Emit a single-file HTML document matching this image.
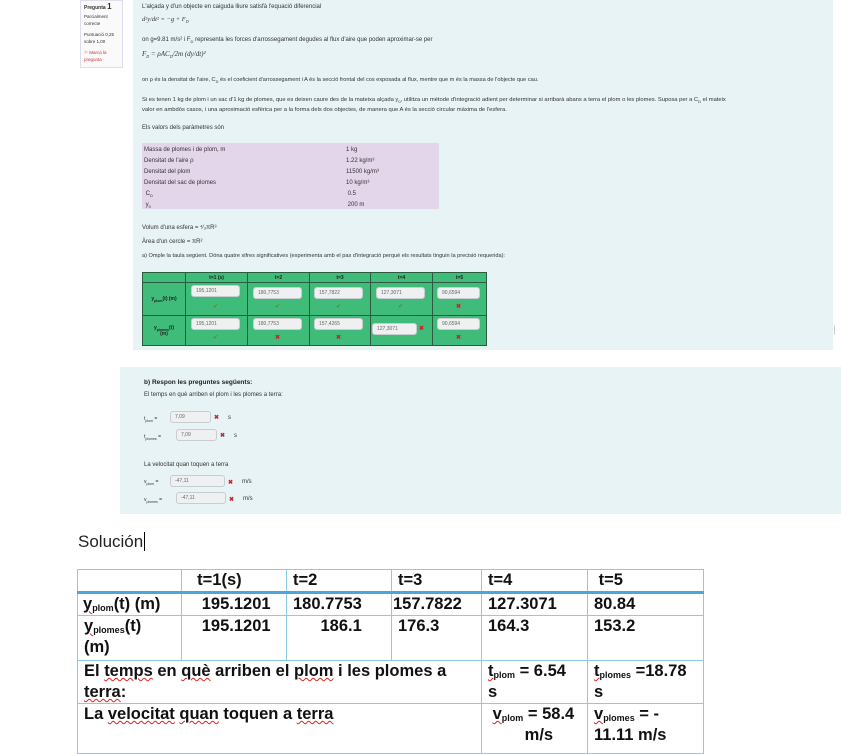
<!DOCTYPE html>
<html><head><meta charset="utf-8"><style>
*{margin:0;padding:0;box-sizing:border-box}
body{width:841px;height:746px;background:#fff;position:relative;overflow:hidden;font-family:"Liberation Sans",sans-serif;color:#333}
.a{position:absolute;white-space:nowrap}
.p{background:#e7f3f5}
.s{font-size:6px;color:#333}
.m{font-family:"Liberation Serif",serif;font-style:italic;font-size:6.5px}
.in{position:absolute;background:#eef0f1;border:1px solid #c9cdd0;border-radius:3px;font-size:5px;color:#666;padding:2px 4px;height:12px}
.ok{position:absolute;color:#4e8a3a;font-size:6px}
.x{position:absolute;color:#c8252c;font-size:6px;font-weight:bold}
table.g{position:absolute;left:142px;top:272px;width:345px;height:74px;border-collapse:collapse;background:#3fbb7a;table-layout:fixed}
table.g td{border:1px solid #2e5a40;position:relative;font-size:5px;text-align:center;font-weight:bold;color:#222}
table.w{position:absolute;left:77px;top:569px;width:627px;border-collapse:collapse;font-weight:bold;font-size:16.5px;color:#111;table-layout:fixed}
table.w td{border:1.3px solid #8ccbe8;vertical-align:top;padding:0 6px;line-height:21px;overflow:hidden;white-space:nowrap}
.sq{text-decoration:underline wavy #d22;text-decoration-thickness:1px}
sub{font-size:9px;vertical-align:-2px;line-height:0}
</style></head><body>
<div class="a" style="left:80px;top:0;width:43px;height:68px;border:1px solid #dde;background:#fafafa"></div>
<div class="a" style="left:84px;top:2px;font-size:5px;font-weight:bold">Pregunta <span style="font-size:8px">1</span></div>
<div class="a s" style="left:84px;top:13px;font-size:4.5px;line-height:7px">Parcialment<br>correcte</div>
<div class="a s" style="left:84px;top:31px;font-size:4.5px;line-height:7px">Puntuació 0,25<br>sobre 1,00</div>
<div class="a" style="left:84px;top:49px;font-size:4.5px;line-height:7px;color:#c33">⚐ Marca la<br>pregunta</div>

<div class="a p" style="left:133px;top:0;width:700px;height:350px"></div>
<div class="a s" style="left:142px;top:4px">L'alçada y d'un objecte en caiguda lliure satisfà l'equació diferencial</div>
<div class="a m" style="left:142px;top:16px">d²y/dt² = −g + F<sub style="font-size:4px">D</sub></div>
<div class="a s" style="left:142px;top:37px">on g=9.81 m/s² i F<sub style="font-size:4px">D</sub> representa les forces d'arrossegament degudes al flux d'aire que poden aproximar-se per</div>
<div class="a m" style="left:142px;top:50px;font-size:7px">F<sub style="font-size:4px">D</sub> = ρAC<sub style="font-size:4px">D</sub>/2m (dy/dt)²</div>
<div class="a s" style="left:142px;top:77px;font-size:5.6px">on ρ és la densitat de l'aire, C<sub style="font-size:4px">D</sub> és el coeficient d'arrossegament i A és la secció frontal del cos exposada al flux, mentre que m és la massa de l'objecte que cau.</div>
<div class="a s" style="left:142px;top:97px;font-size:5.8px">Si es tenen 1 kg de plom i un sac d'1 kg de plomes, que es deixen caure des de la mateixa alçada y<sub style="font-size:4px">0</sub>, utilitza un mètode d'integració adient per determinar si arribarà abans a terra el plom o les plomes. Suposa per a C<sub style="font-size:4px">D</sub> el mateix</div>
<div class="a s" style="left:142px;top:107px;font-size:5.8px">valor en ambdós casos, i una aproximació esfèrica per a la forma dels dos objectes, de manera que A és la secció circular màxima de l'esfera.</div>
<div class="a s" style="left:142px;top:125px">Els valors dels paràmetres són</div>
<div class="a" style="left:142px;top:143px;width:297px;height:66px;background:#e3d6ea"></div>
<div class="a s" style="left:144px;top:145px;line-height:11px">Massa de plomes i de plom, m<br>Densitat de l'aire ρ<br>Densitat del plom<br>Densitat del sac de plomes<br>&nbsp;C<sub style="font-size:4px">D</sub><br>&nbsp;y<sub style="font-size:4px">0</sub></div>
<div class="a s" style="left:346px;top:145px;line-height:11px">1 kg<br>1.22 kg/m³<br>11500 kg/m³<br>10 kg/m³<br>&nbsp;0.5<br>&nbsp;200 m</div>
<div class="a s" style="left:142px;top:225px">Volum d'una esfera = ⁴⁄₃πR³</div>
<div class="a s" style="left:142px;top:239px">Àrea d'un cercle = πR²</div>
<div class="a s" style="left:142px;top:253px;font-size:5.6px">a) Omple la taula següent. Dóna quatre xifres significatives (experimenta amb el pas d'integració perquè els resultats tinguin la precisió requerida):</div>
<table class="g"><tr style="height:10px"><td style="width:43px"></td><td style="width:62px">t=1 (s)</td><td style="width:62px">t=2</td><td style="width:61px">t=3</td><td style="width:62px">t=4</td><td>t=5</td></tr>
<tr style="height:33px"><td>y<sub style="font-size:3.5px">plom</sub>(t) (m)</td><td></td><td></td><td></td><td></td><td></td></tr>
<tr><td>y<sub style="font-size:3.5px">plomes</sub>(t)<br>(m)</td><td></td><td></td><td></td><td></td><td></td></tr></table>
<div class="in" style="left:191px;top:285px;width:49px">195,1201</div>
<div class="in" style="left:253px;top:287px;width:49px">180,7753</div>
<div class="in" style="left:314px;top:287px;width:49px">157,7822</div>
<div class="in" style="left:376px;top:287px;width:49px">127,3071</div>
<div class="in" style="left:437px;top:287px;width:43px">90,6594</div>
<div class="ok" style="left:213px;top:303px">✔</div><div class="ok" style="left:275px;top:303px">✔</div><div class="ok" style="left:336px;top:303px">✔</div><div class="ok" style="left:398px;top:303px">✔</div><div class="x" style="left:456px;top:303px">✖</div>
<div class="in" style="left:191px;top:318px;width:49px">195,1201</div>
<div class="in" style="left:253px;top:318px;width:49px">180,7753</div>
<div class="in" style="left:314px;top:318px;width:49px">157,4265</div>
<div class="in" style="left:372px;top:323px;width:45px">127,3071</div>
<div class="in" style="left:437px;top:318px;width:43px">90,6594</div>
<div class="ok" style="left:213px;top:334px">✔</div><div class="x" style="left:275px;top:334px">✖</div><div class="x" style="left:336px;top:334px">✖</div><div class="x" style="left:419px;top:325px">✖</div><div class="x" style="left:456px;top:334px">✖</div>
<div class="a" style="left:834px;top:325px;width:3px;height:10px;border-left:1px solid #ccc;border-radius:3px"></div>

<div class="a p" style="left:120px;top:367px;width:721px;height:147px"></div>
<div class="a" style="left:144px;top:379px;font-size:6.5px;font-weight:bold;color:#222">b) Respon les preguntes següents:</div>
<div class="a s" style="left:144px;top:392px">El temps en què arriben el plom i les plomes a terra:</div>
<div class="a s" style="left:144px;top:416px;font-size:5px">t<sub style="font-size:3.5px">plom</sub> =</div>
<div class="in" style="left:170px;top:411px;width:41px">7,09</div><div class="x" style="left:214px;top:414px">✖</div><div class="a s" style="left:228px;top:415px">s</div>
<div class="a s" style="left:144px;top:434px;font-size:5px">t<sub style="font-size:3.5px">plomes</sub> =</div>
<div class="in" style="left:176px;top:429px;width:41px">7,09</div><div class="x" style="left:220px;top:432px">✖</div><div class="a s" style="left:234px;top:433px">s</div>
<div class="a s" style="left:144px;top:462px">La velocitat quan toquen a terra</div>
<div class="a s" style="left:144px;top:479px;font-size:5px">v<sub style="font-size:3.5px">plom</sub> =</div>
<div class="in" style="left:170px;top:475px;width:55px">-47,11</div><div class="x" style="left:228px;top:479px">✖</div><div class="a s" style="left:242px;top:479px">m/s</div>
<div class="a s" style="left:144px;top:497px;font-size:5px">v<sub style="font-size:3.5px">plomes</sub> =</div>
<div class="in" style="left:176px;top:492px;width:50px">-47,11</div><div class="x" style="left:229px;top:496px">✖</div><div class="a s" style="left:243px;top:496px">m/s</div>

<div class="a" style="left:78px;top:532px;font-size:17px;color:#222">Solución<span style="border-left:1px solid #000;margin-left:1px"></span></div>
<table class="w">
<tr style="height:23px"><td style="width:104px;border-bottom:3px solid #4aa6dc"></td><td style="width:105px;border-bottom:3px solid #4aa6dc">&nbsp;&nbsp;t=1(s)</td><td style="width:105px;border-bottom:3px solid #4aa6dc">t=2</td><td style="width:90px;border-bottom:3px solid #4aa6dc">t=3</td><td style="width:106px;border-bottom:3px solid #4aa6dc">t=4</td><td style="border-bottom:3px solid #4aa6dc">&nbsp;t=5</td></tr>
<tr style="height:23px"><td style="padding-left:5px"><span class="sq">y<sub>plom</sub></span>(t) (m)</td><td>&nbsp;&nbsp;&nbsp;195.1201</td><td>180.7753</td><td style="padding:0 1px">157.7822</td><td>127.3071</td><td>80.84</td></tr>
<tr style="height:45px"><td><span class="sq">y<sub>plomes</sub></span>(t)<br>(m)</td><td>&nbsp;&nbsp;&nbsp;195.1201</td><td>&nbsp;&nbsp;&nbsp;&nbsp;&nbsp;&nbsp;186.1</td><td>176.3</td><td>164.3</td><td>153.2</td></tr>
<tr style="height:43px"><td colspan="4">El <span class="sq">temps</span> en <span class="sq">què</span> arriben el <span class="sq">plom</span> i les plomes a<br><span class="sq">terra</span>:</td><td><span class="sq">t<sub>plom</sub></span> = 6.54<br>s</td><td style="padding-right:0"><span class="sq">t<sub>plomes</sub></span> =18.78<br>s</td></tr>
<tr style="height:50px"><td colspan="4">La <span class="sq">velocitat</span> <span class="sq">quan</span> toquen a <span class="sq">terra</span></td><td>&nbsp;<span class="sq">v<sub>plom</sub></span> = 58.4<br>&nbsp;&nbsp;&nbsp;&nbsp;&nbsp;&nbsp;&nbsp;&nbsp;m/s</td><td><span class="sq">v<sub>plomes</sub></span> = -<br>11.11 m/s</td></tr>
</table>
</body></html>
